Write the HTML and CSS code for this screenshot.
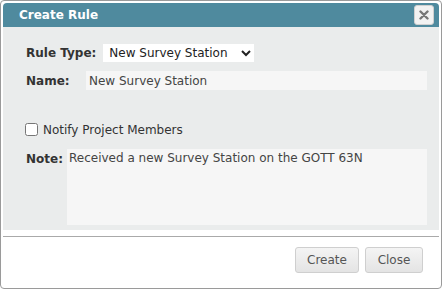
FILE: index.html
```html
<!DOCTYPE html>
<html lang="en">
<head>
  <meta charset="UTF-8" />
  <meta name="viewport" content="width=device-width, initial-scale=1.0"/>
  <title>Create Rule</title>
  <link rel="stylesheet" href="styles.css">
</head>
<body>
  <div class="dialog">
    <div class="titlebar">
      <span class="title">Create Rule</span>
      <button class="close-x" title="Close">
        <svg width="10" height="10" viewBox="0 0 10 10"><path d="M1.5 1.5 L8.5 8.5 M8.5 1.5 L1.5 8.5" stroke="#777" stroke-width="2.4" stroke-linecap="round"/></svg>
      </button>
    </div>

    <div class="content">
      <div class="row type-row">
        <label class="lbl type-lbl" for="ruleType">Rule Type:</label>
        <select id="ruleType" class="sel">
          <option>New Survey Station</option>
        </select>
      </div>
      <div class="row name-row">
        <label class="lbl name-lbl" for="name">Name:</label>
        <input id="name" class="txt" type="text" value="New Survey Station">
      </div>
      <div class="row check-row">
        <input id="notify" class="chk" type="checkbox">
        <label for="notify">Notify Project Members</label>
      </div>
      <div class="row note-row">
        <label class="lbl note-lbl" for="note">Note:</label>
        <textarea id="note" class="area">Received a new Survey Station on the GOTT 63N</textarea>
      </div>
    </div>

    <div class="buttons">
      <button class="btn btn-create">Create</button>
      <button class="btn btn-close">Close</button>
    </div>
  </div>
</body>
</html>
```

FILE: styles.css
```css
body { margin: 0; font-family: "DejaVu Sans", Verdana, sans-serif; font-size: 12px; color: #333; }
.dialog { width: 436px; height: 283px; border: 1px solid #9a9a9a; border-radius: 4px; background: #fff; padding: 2px; display: flex; flex-direction: column; }
.titlebar { height: 24px; background: #4f8a9e; border-radius: 4px 4px 0 0; display: flex; align-items: center; justify-content: space-between; padding: 0 5px 0 16px; }
.title { color: #fff; font-weight: bold; font-size: 12px; }
.close-x { width: 20px; height: 20px; border: 1px solid #d0d0d0; border-radius: 3px; background: #f2f2f2; padding: 0; display: flex; align-items: center; justify-content: center; }
.content { background: #eaecec; height: 209px; padding: 17px 12px 5px 23px; box-sizing: border-box; border-bottom: 6px solid #fff; }
.row { display: flex; align-items: center; }
.lbl { font-weight: bold; color: #333; }
.type-row { height: 18px; margin-bottom: 9px; }
.type-lbl { margin-right: 7px; }
.name-row { height: 19px; }
.name-lbl { width: 60px; }
.sel { font: inherit; color: #222; background: #fff; border: none; height: 18px; width: 151px; padding: 0 2px; }
.txt { font: inherit; color: #444; background: #f6f6f6; border: none; height: 19px; flex: 1; padding: 0 3px; box-sizing: border-box; }
.check-row { height: 13px; margin-top: 33px; margin-bottom: 13px; }
.chk { width: 13px; height: 13px; margin: 0 5px 0 -1px; }
.note-row { align-items: flex-start; }
.note-lbl { margin-top: 3px; margin-right: 4px; }
.area { font: inherit; color: #444; background: #f6f6f6; border: none; height: 76px; flex: 1; resize: none; padding: 2px; box-sizing: border-box; }
.buttons { border-top: 1px solid #aaa; display: flex; justify-content: flex-end; gap: 6px; padding: 10px 16px 0 0; }
.btn { font: inherit; font-size: 12px; color: #555; height: 26px; padding: 0; border: 1px solid #cfcfcf; border-radius: 3px; background: linear-gradient(#f4f4f4, #e4e4e4); }
.btn-create { width: 64px; }
.btn-close { width: 58px; }
```
